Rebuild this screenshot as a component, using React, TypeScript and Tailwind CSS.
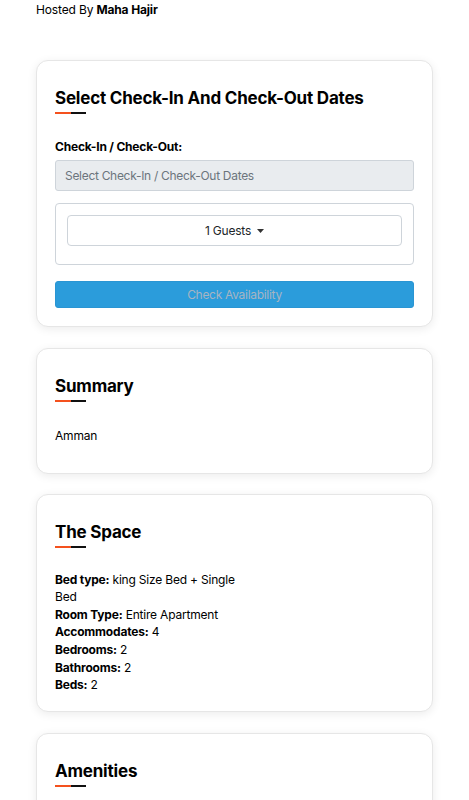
import React from 'react';

function Heading({ children }: { children: React.ReactNode }) {
  return (
    <div>
      <h2 className="text-[17px] leading-[22px] font-bold tracking-[-0.2px] text-black">{children}</h2>
      <div className="mt-[3px] flex h-[2px] w-[31px]">
        <span className="w-1/2 bg-[#f4511e]" />
        <span className="w-1/2 bg-[#111]" />
      </div>
    </div>
  );
}

function Card({ children, className = '' }: { children: React.ReactNode; className?: string }) {
  return (
    <section
      className={`rounded-[12px] border border-[#e6e6e6] bg-white px-[18px] pt-[26px] shadow-[0_2px_10px_rgba(0,0,0,0.08)] ${className}`}
    >
      {children}
    </section>
  );
}

const space = [
  { label: 'Bed type:', value: 'king Size Bed + Single Bed' },
  { label: 'Room Type:', value: 'Entire Apartment' },
  { label: 'Accommodates:', value: '4' },
  { label: 'Bedrooms:', value: '2' },
  { label: 'Bathrooms:', value: '2' },
  { label: 'Beds:', value: '2' },
];

export default function App() {
  return (
    <div className="min-h-screen bg-white px-[36px] font-['Inter',sans-serif] text-[12px] tracking-[-0.2px] text-[#212529]">
      <p className="pt-[1px] text-[12px] leading-[17px] tracking-[-0.15px] text-black">
        Hosted By <b>Maha Hajir</b>
      </p>

      {/* Dates */}
      <Card className="mt-[42px] pb-[18px]">
        <Heading>Select Check-In And Check-Out Dates</Heading>
        <label className="mt-[24px] block text-[12px] leading-[18px] font-bold text-black">
          Check-In / Check-Out:
        </label>
        <div className="mt-[4px] flex h-[31px] items-center rounded-[3px] border border-[#ced4da] bg-[#e9ecef] px-[9px] tracking-[-0.3px] text-[#6c757d]">
          Select Check-In / Check-Out Dates
        </div>
        <div className="mt-[12px] rounded-[4px] border border-[#ced4da] px-[11px] pt-[11px] pb-[18px]">
          <button className="flex h-[31px] w-full items-center justify-center gap-[6px] rounded-[4px] border border-[#ced4da] bg-white text-[#212529]">
            1 Guests
            <svg width="7" height="4" viewBox="0 0 7 4">
              <path d="M0 0h7L3.5 4z" fill="#333" />
            </svg>
          </button>
        </div>
        <button className="mt-[16px] h-[27px] w-full rounded-[3px] border border-[#2a95d3] bg-[#2b9cdb] tracking-[-0.3px] text-[#a7b4c2]">
          Check Availability
        </button>
      </Card>

      {/* Summary */}
      <Card className="mt-[21px] pb-[28px]">
        <Heading>Summary</Heading>
        <p className="mt-[25px] leading-[17.6px] text-black">Amman</p>
      </Card>

      {/* Space */}
      <Card className="mt-[20px] pb-[17px]">
        <Heading>The Space</Heading>
        <div className="mt-[23px] grid grid-cols-[186px_1fr]">
          <ul className="leading-[17.6px] text-black">
            {space.map((s) => (
              <li key={s.label}>
                <b>{s.label}</b> {s.value}
              </li>
            ))}
          </ul>
        </div>
      </Card>

      {/* Amenities */}
      <Card className="mt-[21px] pb-[40px]">
        <Heading>Amenities</Heading>
      </Card>
    </div>
  );
}
